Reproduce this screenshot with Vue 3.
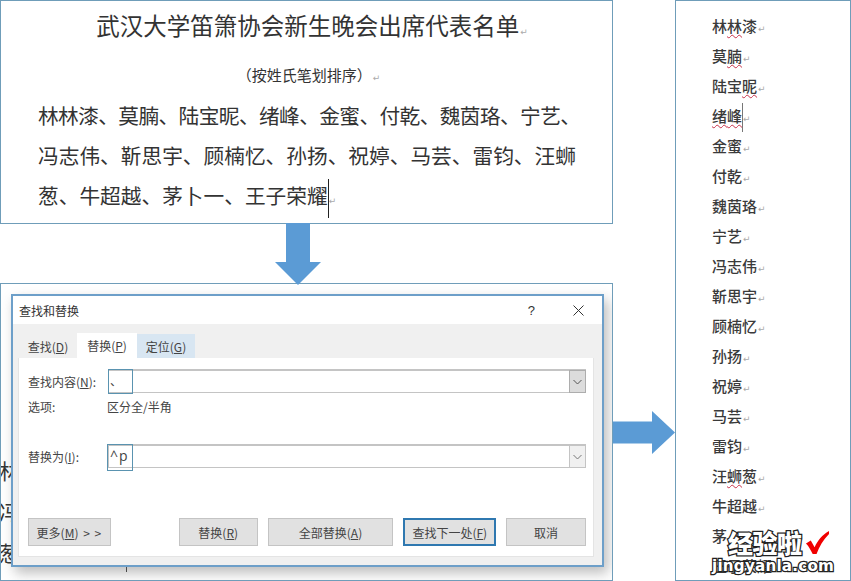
<script setup>
const lines = [
  { text: "林林漆、莫腩、陆宝昵、绪峰、金蜜、付乾、魏茵珞、宁艺、", tight: true },
  { text: "冯志伟、靳思宇、顾楠忆、孙扬、祝婷、马芸、雷钧、汪蛳", tight: false },
];

// wavy: index of the characters that get the spell check underline
const names = [
  { text: "林林漆", wavy: [1] },
  { text: "莫腩", wavy: [1] },
  { text: "陆宝昵", wavy: [2] },
  { text: "绪峰", wavy: [0, 1], caret: true },
  { text: "金蜜" },
  { text: "付乾" },
  { text: "魏茵珞" },
  { text: "宁艺" },
  { text: "冯志伟" },
  { text: "靳思宇" },
  { text: "顾楠忆" },
  { text: "孙扬" },
  { text: "祝婷" },
  { text: "马芸" },
  { text: "雷钧" },
  { text: "汪蛳葱", wavy: [1] },
  { text: "牛超越" },
  { text: "茅卜一" },
  { text: "王子荣耀" },
];
</script>

<template>
  <div class="page">
    <div class="left">
      <section class="doc">
        <h1 class="doc-title">武汉大学笛箫协会新生晚会出席代表名单<span class="mark">↵</span></h1>
        <p class="doc-sub">（按姓氏笔划排序）<span class="mark">↵</span></p>
        <p v-for="line in lines" :key="line.text" class="doc-line" :class="{ tight: line.tight }">{{ line.text }}</p>
        <p class="doc-line">葱、牛超越、茅卜一、王子荣耀<span class="caret"></span><span class="mark">↵</span></p>
      </section>

      <div class="down-arrow">
        <svg width="46" height="62" viewBox="0 0 46 62">
          <polygon points="11,0 35,0 35,39 46,39 23,62 0,39 11,39" fill="#5b9bd5" />
        </svg>
      </div>

      <section class="shot">
        <div class="behind">
          <span>林</span>
          <span>冯</span>
          <span>葱</span>
        </div>
        <i class="behind-tick"></i>

        <div class="dialog">
          <header class="dialog-head">
            <span>查找和替换</span>
            <span class="help">?</span>
            <svg class="close" width="11" height="11" viewBox="0 0 11 11">
              <path d="M0.5 0.5 L10.5 10.5 M10.5 0.5 L0.5 10.5" stroke="#333" stroke-width="1" fill="none" />
            </svg>
          </header>

          <div class="dialog-body">
            <div class="tabs">
              <div class="tab">查找(<u>D</u>)</div>
              <div class="tab active">替换(<u>P</u>)</div>
              <div class="tab hover">定位(<u>G</u>)</div>
            </div>

            <div class="tab-panel">
              <div class="row">
                <label class="row-label">查找内容(<u>N</u>):</label>
                <div class="input">
                  <span class="focus-box first">、</span>
                  <span class="combo">
                    <svg width="9" height="6" viewBox="0 0 9 6"><path d="M0.5 1 L4.5 5 L8.5 1" stroke="#555" fill="none" /></svg>
                  </span>
                </div>
              </div>

              <div class="row options">
                <span class="row-label">选项:</span>
                <span class="option-value">区分全/半角</span>
              </div>

              <div class="row second">
                <label class="row-label">替换为(<u>I</u>):</label>
                <div class="input">
                  <span class="focus-box caret-text">^p</span>
                  <span class="combo light">
                    <svg width="9" height="6" viewBox="0 0 9 6"><path d="M0.5 1 L4.5 5 L8.5 1" stroke="#777" fill="none" /></svg>
                  </span>
                </div>
              </div>

              <div class="buttons">
                <button class="btn more">更多(<u>M</u>) <span class="more-arrows">&gt; &gt;</span></button>
                <button class="btn replace">替换(<u>R</u>)</button>
                <button class="btn replace-all">全部替换(<u>A</u>)</button>
                <button class="btn next">查找下一处(<u>F</u>)</button>
                <button class="btn cancel">取消</button>
              </div>
            </div>
          </div>
        </div>
      </section>
    </div>

    <div class="middle">
      <svg width="62" height="43" viewBox="0 0 62 43">
        <polygon points="0,10.5 39,10.5 39,0 62,21.5 39,43 39,32.5 0,32.5" fill="#5b9bd5" />
      </svg>
    </div>

    <section class="list">
      <div v-for="name in names" :key="name.text" class="name">
        <span
          v-for="(ch, i) in name.text"
          :key="i"
          :class="{ wavy: name.wavy && name.wavy.includes(i) }"
        >{{ ch }}</span><span v-if="name.caret" class="list-caret"></span><span class="mark">↵</span>
      </div>

      <div class="stamp">
        <div class="stamp-top">
          <span class="stamp-cn">经验啦</span>
          <svg width="25" height="24" viewBox="0 0 26 25">
            <path d="M1 13 L6 10 L10 17 C13 10 18 4 25 0 L25 3 C19 9 15 16 12 24 L8 24 C6 20 4 16 1 13 Z" fill="#f00000" />
          </svg>
        </div>
        <div class="stamp-en">jingyanla.com</div>
      </div>
    </section>
  </div>
</template>

<style>
html,
body {
  margin: 0;
  background: #fff;
}
</style>

<style scoped>
.page {
  width: 851px;
  height: 581px;
  display: flex;
  overflow: hidden;
  background: #fff;
  color: #333;
  font-family: "Noto Sans CJK SC", "Liberation Sans", sans-serif;
}

.left {
  width: 613px;
  flex: none;
}

.doc {
  height: 224px;
  box-sizing: border-box;
  border: 1px solid #6f9db9;
}

.doc-title {
  margin: 6px 0 0;
  padding-left: 11px;
  font-size: 23.5px;
  font-weight: 400;
  line-height: 36px;
  text-align: center;
  white-space: nowrap;
}

.doc-sub {
  margin: 13px 0 0;
  padding-left: 4px;
  font-size: 15px;
  line-height: 24px;
  text-align: center;
}

.doc-line {
  margin: 0;
  padding-left: 37px;
  position: relative;
  font-size: 20.7px;
  line-height: 40px;
  white-space: nowrap;
}

.doc-sub + .doc-line {
  margin-top: 5px;
}

.doc-line.tight {
  letter-spacing: -0.6px;
}

.caret {
  display: inline-block;
  width: 1px;
  height: 39px;
  margin-right: -1px;
  vertical-align: middle;
  background: #222;
}

.mark {
  margin-left: 1px;
  color: #aaa;
  font-family: "DejaVu Sans", sans-serif;
  font-size: 9px;
  font-weight: 400;
  letter-spacing: 0;
}

.down-arrow {
  height: 59px;
  padding-left: 275px;
  position: relative;
  z-index: 2;
  margin-top: -1px;
  margin-bottom: 1px;
}

.shot {
  position: relative;
  height: 298px;
  box-sizing: border-box;
  border: 1px solid #6f9db9;
  padding: 10px 0 0 10px;
  overflow: hidden;
}

.behind {
  position: absolute;
  left: -2px;
  top: 166px;
  display: flex;
  flex-direction: column;
  font-size: 21px;
  line-height: 41px;
}

.behind-tick {
  position: absolute;
  left: 125px;
  top: 283px;
  width: 1px;
  height: 5px;
  background: #444;
}

.dialog {
  position: relative;
  width: 593px;
  height: 273px;
  box-sizing: border-box;
  border: 2px solid #6d9fc9;
  background: #f0f0f0;
  box-shadow: 4px 6px 12px rgba(90, 90, 90, 0.4);
  font-size: 12px;
  color: #444;
}

.dialog-head {
  height: 28px;
  display: flex;
  align-items: center;
  padding-left: 6px;
  background: #fff;
  color: #333;
}

.help {
  margin-left: auto;
  margin-right: 38px;
  font-family: "Liberation Sans", sans-serif;
  font-size: 13px;
}

.close {
  margin-right: 18px;
}

.dialog-body {
  padding: 0 8px 0 5px;
}

.tabs {
  display: flex;
  height: 34px;
  align-items: flex-end;
  padding-left: 1px;
}

.tab {
  width: 58px;
  height: 24px;
  display: flex;
  align-items: center;
  justify-content: center;
  font-size: 12px;
}

.tab.active {
  width: 60px;
  height: 25px;
  background: #fff;
}

.tab.hover {
  background: #d8e6f2;
}

.tab-panel {
  height: 199px;
  box-sizing: border-box;
  padding: 11px 7px 11px 9px;
  background: #fff;
  border: 1px solid #e4e4e4;
  border-top: none;
}

.row {
  display: flex;
  align-items: center;
}

.row-label {
  width: 80px;
  flex: none;
}

.option-value {
  margin-left: -1px;
}

.options {
  height: 16px;
  margin-top: 5px;
}

.second {
  margin-top: 30px;
}

.input {
  position: relative;
  flex: 1;
  height: 24px;
  box-sizing: border-box;
  border: 1px solid #c4c4c4;
  border-top-width: 2px;
}

.focus-box {
  position: absolute;
  left: -1px;
  top: -2px;
  width: 25px;
  height: 25px;
  box-sizing: border-box;
  padding-left: 1px;
  border: 1px solid #5a93b0;
  font-size: 12px;
  line-height: 22px;
}

.caret-text {
  left: -2px;
  width: 26px;
  height: 27px;
  padding-left: 2px;
  font-family: "Open Sans", sans-serif;
  font-size: 14px;
  letter-spacing: 1px;
}

.combo {
  position: absolute;
  right: -1px;
  top: -1px;
  width: 17px;
  height: 23px;
  box-sizing: border-box;
  border: 1px solid #adadad;
  background: #dcdcdc;
  display: flex;
  align-items: center;
  justify-content: center;
}

.combo.light {
  background: #f0f0f0;
  border-color: #c4c4c4;
}

.buttons {
  display: flex;
  margin-top: 50px;
}

.btn {
  height: 28px;
  box-sizing: border-box;
  padding: 0;
  border: 1px solid #c4c4c4;
  background: #e1e1e1;
  color: #444;
  font-family: inherit;
  font-size: 12px;
}

.more {
  width: 83px;
  margin-right: 68px;
}

.more-arrows {
  margin-left: 2px;
  letter-spacing: 1px;
}

.replace {
  width: 79px;
  margin-right: 10px;
}

.replace-all {
  width: 126px;
  margin-right: 10px;
}

.next {
  width: 93px;
  margin-right: 10px;
  border: 2px solid #2f78b0;
}

.cancel {
  width: 80px;
}

.middle {
  width: 62px;
  flex: none;
  padding-top: 411px;
}

.list {
  position: relative;
  width: 176px;
  height: 581px;
  box-sizing: border-box;
  flex: none;
  padding: 10px 0 0 36px;
  border: 1px solid #6f9db9;
  overflow: hidden;
}

.name {
  height: 30px;
  position: relative;
  font-size: 15px;
  font-weight: 500;
  line-height: 30px;
  color: #3a3a3a;
  white-space: nowrap;
}

.wavy {
  text-decoration: underline wavy #c8324a 1px;
  text-underline-offset: 2px;
}

.list-caret {
  display: inline-block;
  width: 1px;
  height: 29px;
  margin-right: -1px;
  vertical-align: middle;
  background: #777;
}

.stamp {
  position: absolute;
  left: 36px;
  top: 528px;
  width: 130px;
}

.stamp-top {
  display: flex;
  align-items: center;
  gap: 3px;
  padding-left: 16px;
  height: 27px;
}

.stamp-cn {
  color: #fff;
  font-size: 25px;
  font-weight: 900;
  line-height: 27px;
  letter-spacing: -0.5px;
  -webkit-text-stroke: 2.5px #222;
  paint-order: stroke fill;
}

.stamp-en {
  color: #fff;
  font-family: "DejaVu Sans", sans-serif;
  font-size: 15.2px;
  font-weight: 700;
  line-height: 20px;
  letter-spacing: 0.2px;
  -webkit-text-stroke: 2.5px #222;
  paint-order: stroke fill;
}
</style>
